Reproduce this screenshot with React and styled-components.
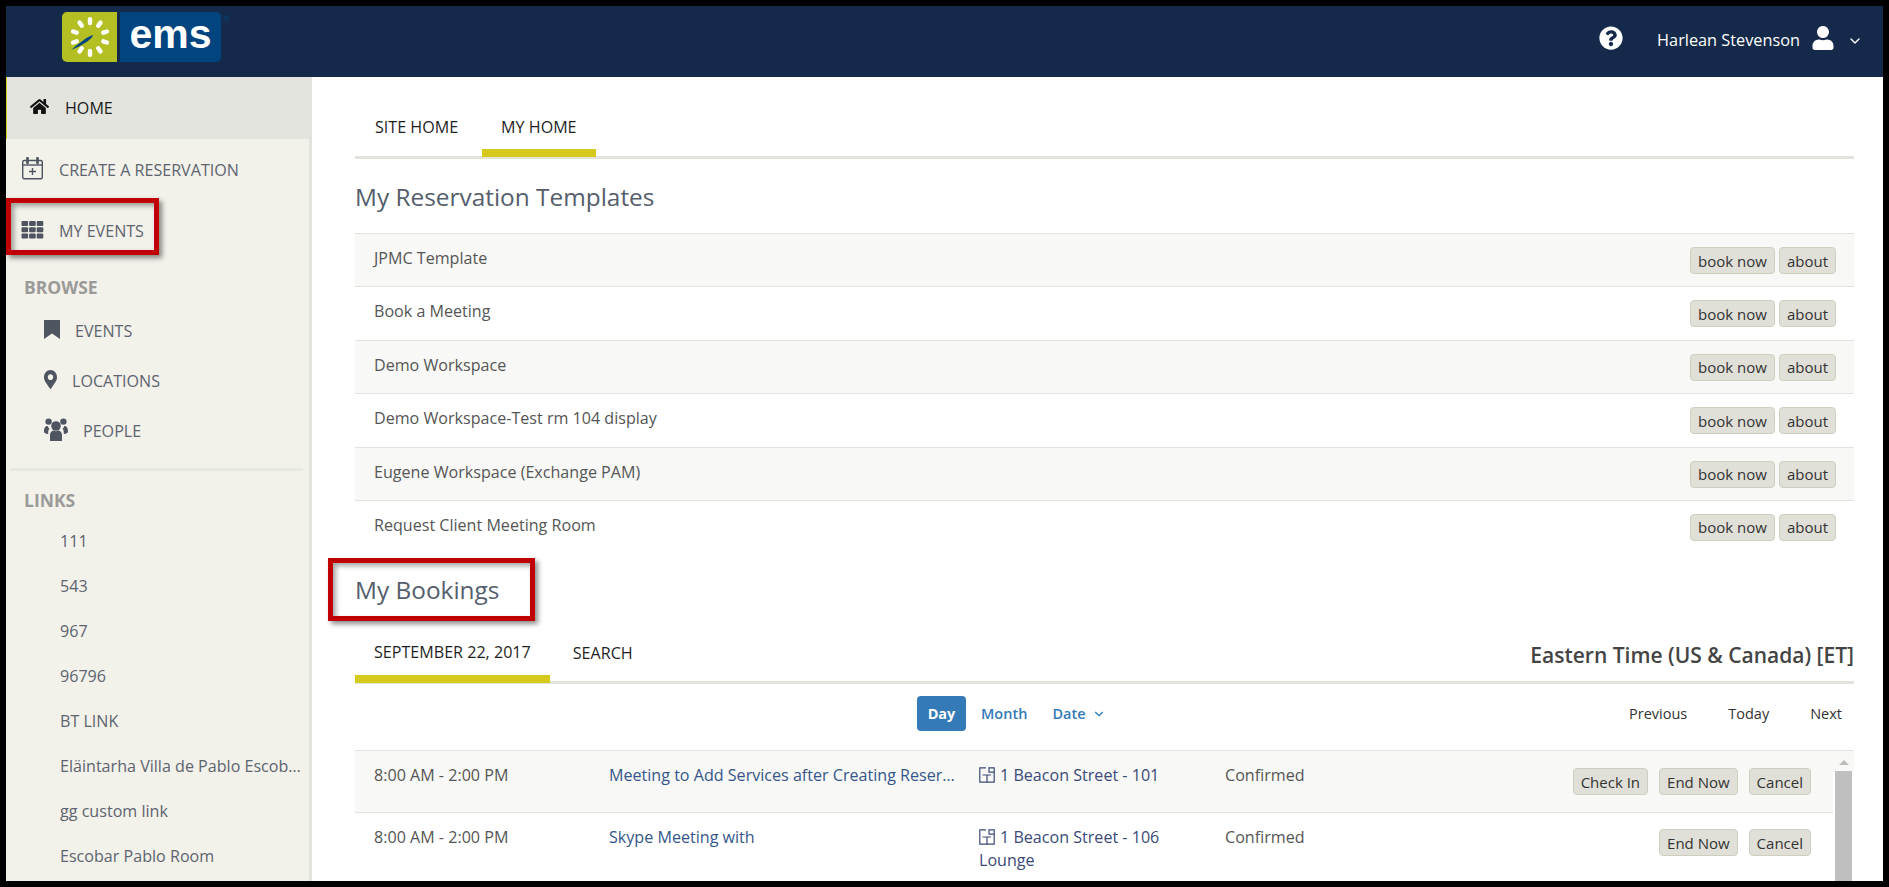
import React from 'react';
import styled, { createGlobalStyle } from 'styled-components';
import { FaHome, FaMapMarkerAlt, FaQuestionCircle, FaUser } from 'react-icons/fa';
import { LuChevronDown } from 'react-icons/lu';

const GlobalStyle = createGlobalStyle`
    html, body {
        margin: 0;
        padding: 0;
        background: #000;
    }
    * {
        box-sizing: border-box;
    }
`

const Frame = styled.div`
    width: 1889px;
    height: 887px;
    border: 6px solid #000;
    background: #fff;
    overflow: hidden;
    display: flex;
    flex-direction: column;
    font-family: "Open Sans", sans-serif;
    font-size: 16.1px;
    color: #555;
`

const Header = styled.header`
    flex: 0 0 71px;
    background: #152a4a;
    display: flex;
    align-items: center;
    padding: 0 20px 2px 56px;
    color: #fff;
`

const Logo = styled.div`
    display: flex;
    height: 50px;
    margin-top: -7px;
    gap: 3px;
    position: relative;
`

const LogoMark = styled.div`
    width: 55px;
    background: #b3bf23;
    border-radius: 5px 0 0 5px;
    display: flex;
    align-items: center;
    justify-content: center;
`

const LogoWord = styled.div`
    width: 101px;
    background: #00457f;
    border-radius: 0 5px 5px 0;
    color: #fff;
    font-family: "Liberation Sans", sans-serif;
    font-weight: 700;
    font-size: 41px;
    line-height: 44px;
    text-align: center;
`

const LogoReg = styled.span`
    position: absolute;
    left: 161px;
    top: 2px;
    color: #00457f;
    font-family: "Liberation Sans", sans-serif;
    font-size: 9px;
`

const HeaderRight = styled.div`
    margin-left: auto;
    display: flex;
    align-items: center;
`

const HelpIcon = styled(FaQuestionCircle)`
    width: 24px;
    height: 24px;
    margin-right: 34px;
    margin-top: -6px;
`

const UserName = styled.span`
    font-size: 16.3px;
    margin-top: -2px;
`

const UserIcon = styled(FaUser)`
    width: 22px;
    height: 24px;
    margin: -6px 0 0 12px;
`

const Chevron = styled(LuChevronDown)`
    width: 16px;
    height: 16px;
    margin-left: 13px;
`

const Body = styled.div`
    flex: 1;
    display: flex;
    min-height: 0;
`

const Sidebar = styled.nav`
    flex: 0 0 306px;
    background: #f2f1ea;
    border-right: 3px solid #e3e3de;
    overflow: hidden;
`

const HomeItem = styled.div`
    height: 62px;
    background: #e3e4de;
    border-left: 1px solid #d5c91c;
    display: flex;
    align-items: center;
    padding-left: 23px;
    color: #1b1b1b;
    gap: 16px;
    svg {
        width: 19px;
        height: 19px;
        color: #111;
        margin-top: -4px;
    }
`

const NavItem = styled.div`
    position: relative;
    height: 61px;
    display: flex;
    align-items: center;
    padding-left: 15px;
    gap: 15px;
    color: #5d6470;
    svg {
        width: 23px;
        height: 23px;
        margin-top: -3px;
        color: #4f5560;
        flex: none;
    }
`

const SectionTitle = styled.div`
    padding-left: 18px;
    font-weight: 700;
    color: #9a9a98;
    font-size: 17.5px;
    line-height: 20px;
`

const SubItem = styled.div`
    height: 50px;
    display: flex;
    align-items: center;
    padding-left: 38px;
    gap: 15px;
    color: #5d6470;
    svg {
        width: ${p => p.$icon}px;
        height: ${p => p.$iconHeight}px;
        margin-top: -3px;
        color: #4f5560;
        flex: none;
    }
`

const BrowseGroup = styled.div`
    padding-top: 16px;
`

const SubList = styled.div`
    margin-top: 9px;
`

const Divider = styled.div`
    height: 3px;
    margin: 12px 6px 19px 4px;
    background: #e8e8e2;
`

const LinkList = styled.div`
    padding: 9px 0 0 54px;
    color: #5d6470;
`

const LinkItem = styled.div`
    height: 45px;
    line-height: 45px;
    width: 241px;
    white-space: nowrap;
    overflow: hidden;
    text-overflow: ellipsis;
`

const Main = styled.main`
    flex: 1;
    min-width: 0;
    padding: 0 29px 0 43px;
    position: relative;
    overflow: hidden;
`

const TabBar = styled.div`
    display: flex;
    align-items: flex-end;
    height: ${p => p.$height}px;
    border-bottom: 3px solid #e3e3de;
`

const Tab = styled.div`
    height: ${p => p.$tall}px;
    padding: 0 ${p => p.$right}px 0 ${p => p.$left}px;
    margin-bottom: -${p => p.$over}px;
    color: #1f1f1f;
    line-height: 24px;
    border-bottom: 8px solid ${p => (p.$active ? '#d5c91c' : 'transparent')};
`

const Title = styled.h2`
    margin: 0;
    font-weight: 400;
    font-size: 24.4px;
    color: #555e6c;
    height: 74px;
    line-height: 76px;
`

const TemplateRow = styled.div`
    height: 53.4px;
    border-top: 1px solid #e3e3de;
    display: flex;
    align-items: flex-start;
    padding: 13px 18px 0 19px;
    background: ${p => (p.$odd ? '#f8f8f6' : '#fff')};
    color: #555;
`

const RowActions = styled.div`
    margin-left: auto;
    display: flex;
    gap: ${p => p.$gap}px;
    margin-top: ${p => p.$top || 0}px;
`

const ActionButton = styled.button`
    height: 27px;
    padding: 0 7px;
    border: 1px solid #cfcfc0;
    border-radius: 4px;
    background: #e0e0d8;
    color: #333;
    font: 15px "Open Sans", sans-serif;
`

const BookingsTitle = styled(Title)`
    height: 76px;
    line-height: 74px;
`

const Zone = styled.div`
    margin-left: auto;
    align-self: flex-end;
    margin-bottom: 12px;
    font-weight: 600;
    font-size: 21px;
    line-height: 28px;
    color: #444;
`

const Toolbar = styled.div`
    height: 66px;
    display: flex;
    align-items: center;
    padding-left: 562px;
    padding-bottom: 7px;
    font-size: 14.5px;
`

const DayButton = styled.div`
    width: 49px;
    height: 35px;
    line-height: 35px;
    text-align: center;
    background: #337ab7;
    border-radius: 4px;
    color: #fff;
    font-weight: 700;
`

const ViewLink = styled.div`
    color: #337ab7;
    font-weight: 600;
    margin-left: ${p => p.$left}px;
    display: flex;
    align-items: center;
    gap: 6px;
    svg {
        width: 14px;
        height: 14px;
    }
`

const Pager = styled.div`
    margin-left: auto;
    display: flex;
    gap: 41px;
    padding-right: 12px;
    color: #333;
`

const BookingsArea = styled.div`
    display: flex;
    border-top: 1px solid #e3e3de;
`

const BookingList = styled.div`
    flex: 1;
`

const BookingRow = styled.div`
    border-bottom: 1px solid #e3e3de;
    display: grid;
    grid-template-columns: 235px 370px 246px auto 1fr;
    padding: 13px 22px 0 19px;
    background: ${p => (p.$odd ? '#f8f8f6' : '#fff')};
    height: ${p => p.$height}px;
    line-height: 23px;
`

const BookingName = styled.div`
    color: #35568a;
    width: 349px;
    white-space: nowrap;
    overflow: hidden;
    text-overflow: ellipsis;
`

const BookingPlace = styled.div`
    color: #3b4a78;
    svg {
        width: 16px;
        height: 16px;
        margin-right: 5px;
        vertical-align: -2px;
    }
`

const ScrollTrack = styled.div`
    flex: 0 0 21px;
    padding: 0 2px;
    background: linear-gradient(#f8f8f6 21px, #fff 21px);
    display: flex;
    flex-direction: column;
    align-items: center;
`

const ScrollArrow = styled.div`
    margin: 9px 0 6px;
    width: 0;
    height: 0;
    border: 5px solid transparent;
    border-top: 0;
    border-bottom: 5px solid #bbb;
`

const ScrollThumb = styled.div`
    align-self: stretch;
    height: 200px;
    background: #bfbfbf;
`

const Callout = styled.div`
    position: absolute;
    left: ${p => p.$left}px;
    top: ${p => p.$top}px;
    width: ${p => p.$width}px;
    height: ${p => p.$height}px;
    border: 5px solid #c00000;
    box-shadow: 3px 3px 5px rgba(0, 0, 0, 0.45), inset 3px 3px 5px rgba(0, 0, 0, 0.35);
    pointer-events: none;
`

const CalendarPlus = () => (
    <svg viewBox="0 0 23 23" fill="none" stroke="currentColor" strokeWidth="1.4">
        <rect x="1.7" y="3.5" width="19.6" height="18.3" rx="1.5" />
        <path d="M1.7 8h19.6" />
        <path d="M6.5 1v5M16.5 1v5" strokeWidth="2.6" strokeLinecap="round" />
        <path d="M11.5 11v7M8 14.5h7" />
    </svg>
)

const GridIcon = () => {
    const cells = [];
    for (let row = 0; row < 3; row++) {
        for (let col = 0; col < 3; col++) {
            cells.push(<rect key={`${row}-${col}`} x={0.5 + col * 7.6} y={3 + row * 6.2} width="6.6" height="5" rx="1" fill="currentColor" />);
        }
    }
    return <svg viewBox="0 0 23 23">{cells}</svg>;
}

const BookmarkIcon = () => (
    <svg viewBox="0 0 16 19" fill="currentColor">
        <path d="M0 0h16v19l-8-5.5L0 19z" />
    </svg>
)

const PeopleIcon = () => (
    <svg viewBox="0 0 24 23" fill="currentColor">
        <circle cx="12" cy="8" r="4.8" />
        <circle cx="4.6" cy="3.6" r="3.2" />
        <circle cx="19.4" cy="3.6" r="3.2" />
        <path d="M6 23v-6c0-2.4 1.6-4 3.4-4.4 1.5 1 3.7 1 5.2 0 1.8.4 3.4 2 3.4 4.4v6z" />
        <path d="M0 13.5C0 9.5 1.5 8 3.6 7.9c.4 1 1 2 1.8 2.8-1.2 1.3-1.2 2.8-1.2 5.3C1.6 15.8 0 15 0 13.5z" />
        <path d="M24 13.5c0-4-1.5-5.5-3.6-5.6-.4 1-1 2-1.8 2.8 1.2 1.3 1.2 2.8 1.2 5.3 2.6-.2 4.2-1 4.2-2.5z" />
    </svg>
)

const RoomIcon = () => (
    <svg viewBox="0 0 16 16" fill="none" stroke="currentColor" strokeWidth="1.2">
        <path d="M7 .8H.8v14.4h14.4V.8H10v4.4h5.2" />
        <path d="M3.5 8H12M8 8v7.2" />
    </svg>
)

const LogoBurst = () => {
    const rays = [0, 36, 72, 108, 144, 180, 216, 252, 288, 324];
    return (
        <svg width="48" height="44" viewBox="-24 -22 48 44">
            {rays.map(a => (
                <rect key={a} x="-2.2" y="-20" width="4.4" height="8.2" rx="2.2" fill="#fff" transform={`rotate(${a})`} />
            ))}
            <path d="M-19 13 C-12 7 -2 -1 3 -2 C3 1 -6 8 -19 13Z" fill="#00457f" />
        </svg>
    );
}

const templates = [
    'JPMC Template',
    'Book a Meeting',
    'Demo Workspace',
    'Demo Workspace-Test rm 104 display',
    'Eugene Workspace (Exchange PAM)',
    'Request Client Meeting Room',
];

const links = ['111', '543', '967', '96796', 'BT LINK', 'Eläintarha Villa de Pablo Escobar', 'gg custom link', 'Escobar Pablo Room'];

export default function App() {
    return (
        <Frame>
            <GlobalStyle />
            <Header>
                <Logo>
                    <LogoMark><LogoBurst /></LogoMark>
                    <LogoWord>ems</LogoWord>
                    <LogoReg>®</LogoReg>
                </Logo>
                <HeaderRight>
                    <HelpIcon />
                    <UserName>Harlean Stevenson</UserName>
                    <UserIcon />
                    <Chevron />
                </HeaderRight>
            </Header>
            <Body>
                <Sidebar>
                    <HomeItem><FaHome />HOME</HomeItem>
                    <NavItem><CalendarPlus />CREATE A RESERVATION</NavItem>
                    <NavItem>
                        <GridIcon />MY EVENTS
                        <Callout $left={0} $top={-2} $width={153} $height={57} />
                    </NavItem>
                    <BrowseGroup>
                        <SectionTitle>BROWSE</SectionTitle>
                        <SubList>
                            <SubItem $icon={16} $iconHeight={19}><BookmarkIcon />EVENTS</SubItem>
                            <SubItem $icon={13} $iconHeight={19}><FaMapMarkerAlt preserveAspectRatio="none" />LOCATIONS</SubItem>
                            <SubItem $icon={24} $iconHeight={23}><PeopleIcon />PEOPLE</SubItem>
                        </SubList>
                    </BrowseGroup>
                    <Divider />
                    <SectionTitle>LINKS</SectionTitle>
                    <LinkList>
                        {links.map(l => <LinkItem key={l}>{l}</LinkItem>)}
                    </LinkList>
                </Sidebar>
                <Main>
                    <TabBar $height={82}>
                        <Tab $tall={42} $left={20} $right={24} $over={1}>SITE HOME</Tab>
                        <Tab $tall={42} $left={19} $right={19} $over={1} $active>MY HOME</Tab>
                    </TabBar>
                    <Title>My Reservation Templates</Title>
                    {templates.map((t, i) => (
                        <TemplateRow key={t} $odd={i % 2 === 0}>
                            {t}
                            <RowActions $gap={4}>
                                <ActionButton>book now</ActionButton>
                                <ActionButton>about</ActionButton>
                            </RowActions>
                        </TemplateRow>
                    ))}
                    <BookingsTitle>My Bookings</BookingsTitle>
                    <Callout $left={16} $top={481} $width={207} $height={63} />
                    <TabBar $height={55}>
                        <Tab $tall={43} $left={19} $right={19} $over={2} $active>SEPTEMBER 22, 2017</Tab>
                        <Tab $tall={42} $left={23} $right={22} $over={2}>SEARCH</Tab>
                        <Zone>Eastern Time (US &amp; Canada) [ET]</Zone>
                    </TabBar>
                    <Toolbar>
                        <DayButton>Day</DayButton>
                        <ViewLink $left={15}>Month</ViewLink>
                        <ViewLink $left={25}>Date <LuChevronDown /></ViewLink>
                        <Pager><span>Previous</span><span>Today</span><span>Next</span></Pager>
                    </Toolbar>
                    <BookingsArea>
                        <BookingList>
                            <BookingRow $odd $height={62}>
                                <span>8:00 AM - 2:00 PM</span>
                                <BookingName>Meeting to Add Services after Creating Reservation</BookingName>
                                <BookingPlace><RoomIcon />1 Beacon Street - 101</BookingPlace>
                                <span>Confirmed</span>
                                <RowActions $gap={11} $top={4}>
                                    <ActionButton>Check In</ActionButton>
                                    <ActionButton>End Now</ActionButton>
                                    <ActionButton>Cancel</ActionButton>
                                </RowActions>
                            </BookingRow>
                            <BookingRow $height={80}>
                                <span>8:00 AM - 2:00 PM</span>
                                <BookingName>Skype Meeting with</BookingName>
                                <BookingPlace><RoomIcon />1 Beacon Street - 106<br />Lounge</BookingPlace>
                                <span>Confirmed</span>
                                <RowActions $gap={11} $top={3}>
                                    <ActionButton>End Now</ActionButton>
                                    <ActionButton>Cancel</ActionButton>
                                </RowActions>
                            </BookingRow>
                        </BookingList>
                        <ScrollTrack>
                            <ScrollArrow />
                            <ScrollThumb />
                        </ScrollTrack>
                    </BookingsArea>
                </Main>
            </Body>
        </Frame>
    );
}
